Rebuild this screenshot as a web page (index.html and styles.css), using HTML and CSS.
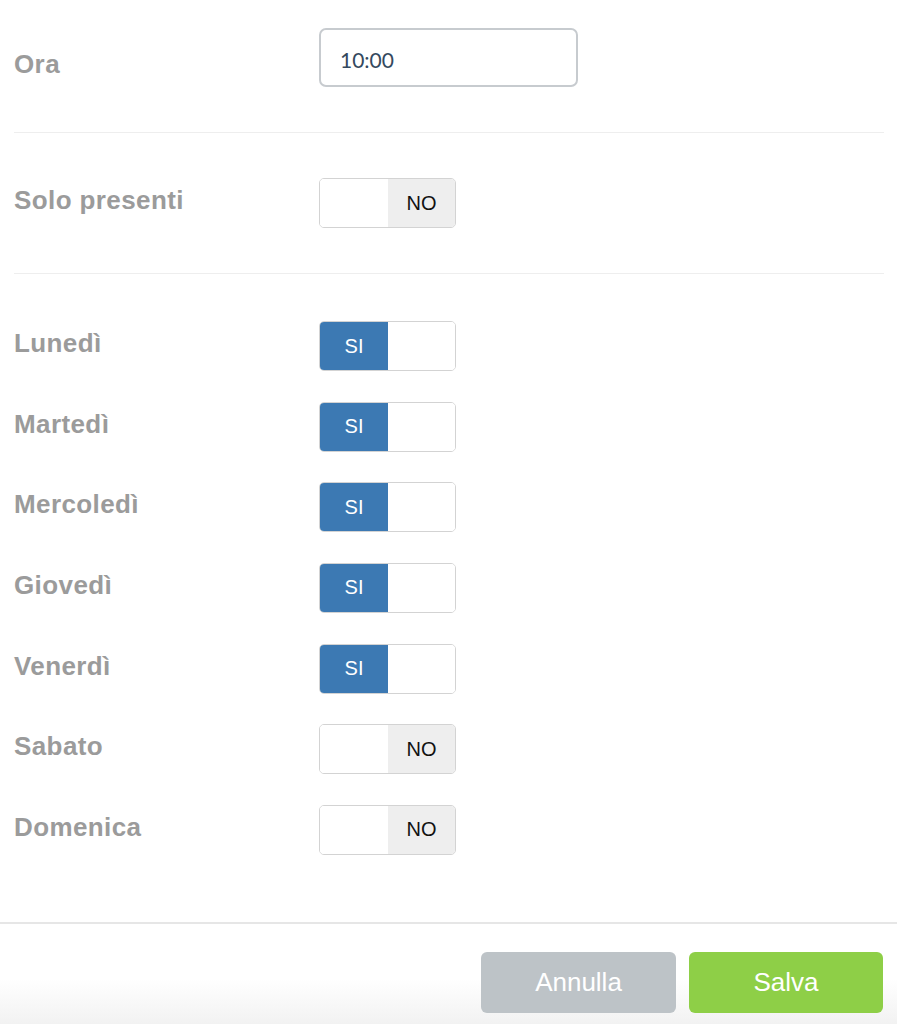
FILE: index.html
```html
<!DOCTYPE html>
<html lang="it">
<head>
    <meta charset="UTF-8">
    <meta name="viewport" content="width=device-width, initial-scale=1.0">
    <title>Pianificazione</title>
    <link rel="stylesheet" href="styles.css">
</head>
<body>
    <div class="content">
        <!-- Ora -->
        <div class="group group-time">
            <div class="row">
                <div class="label label-time">Ora</div>
                <div class="control">
                    <input class="time-input" type="text" value="10:00">
                </div>
            </div>
        </div>

        <!-- Solo presenti -->
        <div class="group group-present">
            <div class="row">
                <div class="label">Solo presenti</div>
                <div class="control">
                    <div class="switch">
                        <span class="switch-blank"></span>
                        <span class="switch-off">NO</span>
                    </div>
                </div>
            </div>
        </div>

        <!-- Giorni -->
        <div class="group group-days">
            <div class="row">
                <div class="label">Lunedì</div>
                <div class="control">
                    <div class="switch"><span class="switch-on">SI</span><span class="switch-blank"></span></div>
                </div>
            </div>
            <div class="row">
                <div class="label">Martedì</div>
                <div class="control">
                    <div class="switch"><span class="switch-on">SI</span><span class="switch-blank"></span></div>
                </div>
            </div>
            <div class="row">
                <div class="label">Mercoledì</div>
                <div class="control">
                    <div class="switch"><span class="switch-on">SI</span><span class="switch-blank"></span></div>
                </div>
            </div>
            <div class="row">
                <div class="label">Giovedì</div>
                <div class="control">
                    <div class="switch"><span class="switch-on">SI</span><span class="switch-blank"></span></div>
                </div>
            </div>
            <div class="row">
                <div class="label">Venerdì</div>
                <div class="control">
                    <div class="switch"><span class="switch-on">SI</span><span class="switch-blank"></span></div>
                </div>
            </div>
            <div class="row">
                <div class="label">Sabato</div>
                <div class="control">
                    <div class="switch"><span class="switch-blank"></span><span class="switch-off">NO</span></div>
                </div>
            </div>
            <div class="row">
                <div class="label">Domenica</div>
                <div class="control">
                    <div class="switch"><span class="switch-blank"></span><span class="switch-off">NO</span></div>
                </div>
            </div>
        </div>
    </div>

    <!-- Footer buttons -->
    <div class="footer">
        <button class="btn btn-cancel">Annulla</button>
        <button class="btn btn-save">Salva</button>
    </div>
</body>
</html>
```

FILE: styles.css
```css
body {
    margin: 0;
    padding: 0;
    background-color: #fff;
    font-family: "Liberation Sans", Arial, sans-serif;
}

.content {
    padding: 0 13px 0 14px;
}

.group {
    border-bottom: 1px solid #eeeeee;
}

.group-time {
    padding: 28px 0 45px;
}

.group-present {
    padding: 45px 0 45px;
}

.group-days {
    padding: 47px 0 67px;
    border-bottom: none;
    display: flex;
    flex-direction: column;
    gap: 30.67px;
}

.row {
    display: grid;
    grid-template-columns: 305px 1fr;
    align-items: start;
}

.label {
    font-size: 26px;
    font-weight: bold;
    line-height: 30px;
    letter-spacing: 0.4px;
    color: #9b9b9b;
    padding-top: 7px;
}

.label-time {
    padding-top: 21px;
}

.time-input {
    box-sizing: border-box;
    width: 259px;
    height: 59px;
    border: 2px solid #c7cbcf;
    border-radius: 7px;
    padding: 4px 0 0 19px;
    font-family: Lato, "Open Sans", sans-serif;
    font-size: 21px;
    color: #34495e;
    outline: none;
    margin: 0;
}

.switch {
    box-sizing: border-box;
    width: 137px;
    height: 50px;
    border: 1px solid #d3d3d3;
    border-radius: 5px;
    overflow: hidden;
    display: flex;
}

.switch > span {
    width: 68px;
    display: flex;
    align-items: center;
    justify-content: center;
    font-size: 20px;
}

.switch > span:last-child {
    width: 67px;
}

.switch-on {
    background-color: #3c79b3;
    color: #fff;
}

.switch-off {
    background-color: #eeeeee;
    color: #111;
}

.switch-blank {
    background-color: #fff;
}

.footer {
    border-top: 2px solid #e6e6e6;
    padding: 28px 14px 11px 0;
    display: flex;
    justify-content: flex-end;
    gap: 13px;
    background: linear-gradient(to bottom, #fff 55%, #f2f2f2 100%);
}

.btn {
    width: 195px;
    height: 61px;
    border: none;
    border-radius: 6px;
    color: #fff;
    font-family: "Liberation Sans", Arial, sans-serif;
    font-size: 26px;
    cursor: pointer;
}

.btn-cancel {
    background-color: #bdc3c7;
}

.btn-save {
    width: 194px;
    background-color: #8ecf47;
}
```
